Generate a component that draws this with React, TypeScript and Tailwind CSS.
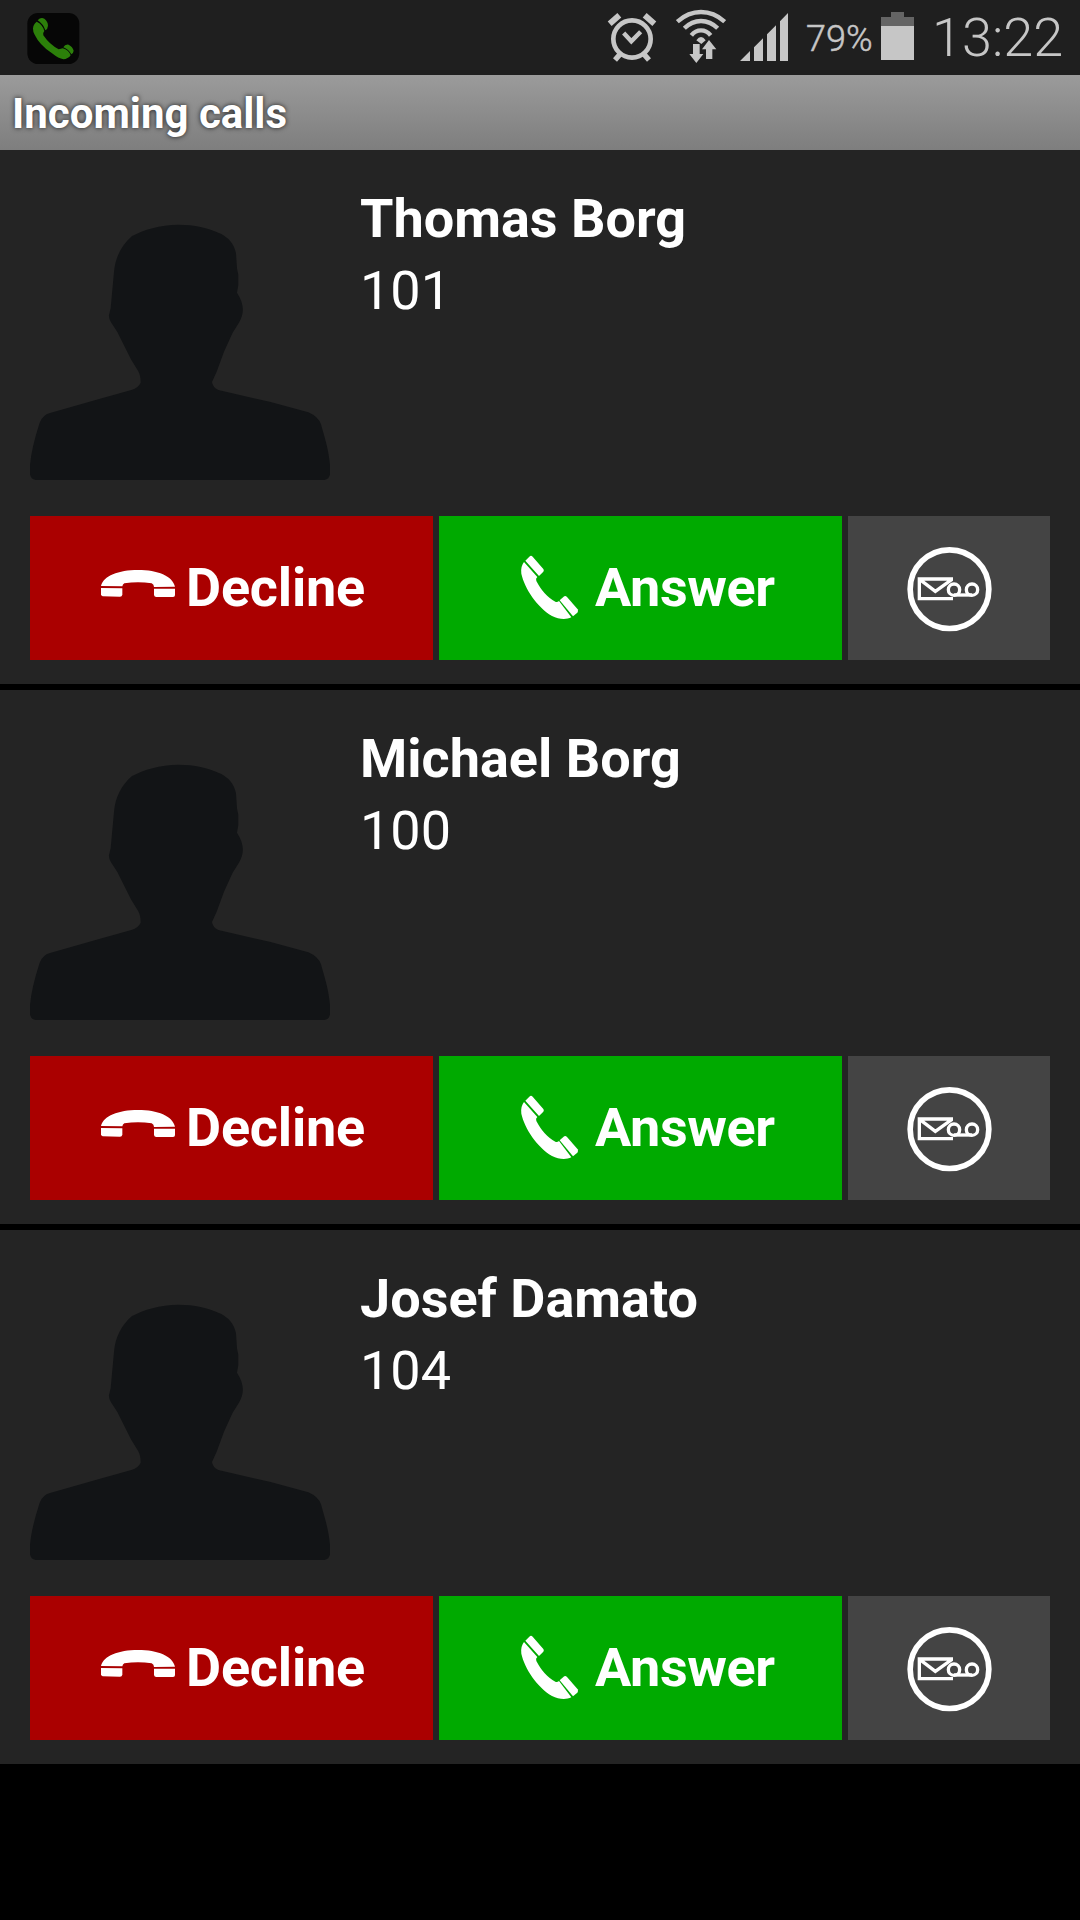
const calls = [
  { name: "Thomas Borg", number: "101" },
  { name: "Michael Borg", number: "100" },
  { name: "Josef Damato", number: "104" },
];

export default function App() {
  return (
    <div className="w-[1080px] h-[1920px] bg-black text-white font-[Roboto,sans-serif] overflow-hidden">
      <StatusBar />
      <header className="h-[75px] flex items-center px-3 pt-0.5 bg-linear-to-b from-[#9b9b9b] to-[#7e7e7e]">
        <h1 className="text-[42px] leading-none font-bold text-shadow-[0_0_5px_rgba(0,0,0,0.8)]">
          Incoming calls
        </h1>
      </header>
      <main className="flex flex-col gap-1.5">
        {calls.map((call) => (
          <CallCard key={call.number} name={call.name} number={call.number} />
        ))}
      </main>
    </div>
  );
}

function StatusBar() {
  return (
    <div className="h-[75px] flex items-center bg-[#1f1f1f] text-[#c6c6c6] pl-[27px] pr-[18px]">
      <AppIcon />
      <div className="ml-auto flex items-center">
        <AlarmIcon />
        <WifiIcon />
        <SignalIcon />
        <span className="w-[75px] ml-[18px] pt-0.5 text-[36px] leading-none font-light [-webkit-text-stroke:0.5px]">
          79%
        </span>
        <BatteryIcon />
        <span className="w-[130px] ml-[18px] text-[54px] leading-none font-light">
          13:22
        </span>
      </div>
    </div>
  );
}

function CallCard({ name, number }: { name: string; number: string }) {
  return (
    <article className="h-[534px] bg-[#242424] px-[30px] pt-[30px] pb-6 flex flex-col">
      <div className="flex gap-[30px]">
        <Avatar />
        <div className="pt-[3px] text-[54px] leading-[72px]">
          <h2 className="font-bold">{name}</h2>
          <p>{number}</p>
        </div>
      </div>
      <div className="mt-auto flex gap-1.5 h-36">
        <button className="w-[403px] pl-[60px] flex items-center bg-[#aa0000] text-[54px] font-bold tracking-[-0.2px]">
          <DeclineIcon />
          <span className="pb-0.5">Decline</span>
        </button>
        <button className="w-[403px] pl-[60px] flex items-center bg-[#00aa00] text-[54px] font-bold tracking-[-0.4px]">
          <AnswerIcon />
          <span className="pb-0.5">Answer</span>
        </button>
        <button
          aria-label="Voicemail"
          className="w-[202px] flex items-center justify-center bg-[#444444]"
        >
          <VoicemailIcon />
        </button>
      </div>
    </article>
  );
}

/* Icons */

function Avatar() {
  return (
    <svg width="300" height="300" viewBox="90 -60 900 900" fill="#121416">
      <path d="M535 74C480 74 430 90 396 108C364 136 346 172 342 215L332 325L327 345Q326 356 333 367L352 396L394 480L414 512Q422 525 422 548Q416 562 394 570L300 596L150 639Q128 645 119 668Q94 745 90 795V823Q92 838 107 840H973Q988 838 990 823V795C986 750 976 720 963 673Q955 650 925 637L812 606L655 570Q638 562 636 546L650 515L672 455L698 398L716 370C734 340 733 312 711 278L715 255V225L711 205L708 160C702 130 684 113 664 102C620 82 585 74 535 74Z" />
    </svg>
  );
}

function AppIcon() {
  return (
    <svg width="53" height="75" viewBox="80 0 159 225">
      <rect x="81" y="39" width="156" height="153" rx="32" fill="#060606" />
      <path
        d="M98 86Q98 74 109 65Q127 73 132 93Q126 100 129 106Q148 134 175 148Q182 147 187 145Q205 150 211 166Q203 177 189 178Q175 176 155 160Q117 134 103 104Q98 96 98 86ZM112 61Q121 51 132 56Q143 65 143 77Q142 88 135 91Q129 72 112 61ZM189 142Q194 132 205 134Q217 140 220 152Q219 160 213 163Q205 148 189 142Z"
        fill="#2c800a"
      />
    </svg>
  );
}

function AlarmIcon() {
  return (
    <svg width="50" height="75" viewBox="51 0 150 225" fill="none" stroke="currentColor">
      <circle cx="126" cy="117" r="56" strokeWidth="14" />
      <path d="M101 99L124 124L152 95" strokeWidth="13" />
      <path d="M90 163L75 180M162 163L177 180" strokeWidth="16" />
      <path d="M59 71L88 46M193 71L164 46" strokeWidth="18" />
    </svg>
  );
}

function WifiIcon() {
  return (
    <svg className="ml-[19px]" width="50" height="75" viewBox="258 0 150 225" fill="currentColor">
      <g fill="none" stroke="currentColor" strokeWidth="13">
        <path d="M262 65Q294 36 333 36T404 65" />
        <path d="M283 85Q305 63 333 63T383 85" />
        <path d="M304 106Q316 91 333 91T362 106" />
      </g>
      <path d="M319 121Q333 101 347 121L334 132Z" />
      <path d="M309 132H329V162H340L319 189L298 162H309Z" />
      <path d="M357 120L379 148H367V177H348V148H336Z" />
    </svg>
  );
}

function SignalIcon() {
  return (
    <svg className="ml-3.5" width="48" height="75" viewBox="450 0 144 225" fill="currentColor">
      <path d="M450 183L480 153V183ZM492 183V142L519 115V183ZM531 183V103L558 76V183ZM570 183V64L594 39V183Z" />
    </svg>
  );
}

function BatteryIcon() {
  return (
    <svg width="33" height="75" viewBox="273 0 99 225">
      <path d="M273 51H303V36H342V51H372V78H273Z" fill="#646464" />
      <path d="M273 78H372V180H273Z" fill="currentColor" />
    </svg>
  );
}

function DeclineIcon() {
  return (
    <svg width="96" height="96" viewBox="270 120 288 288" fill="currentColor">
      <path d="M303 258C310 228 355 210 414 210S518 228 525 260L462 261Q462 254 455 250Q414 243 373 250Q368 253 367 259Z" />
      <path d="M303 264L367 265V284Q366 290 360 290L308 289Q303 288 303 283Z" />
      <path d="M462 266H525V285Q525 291 519 291H468Q462 290 462 284Z" />
    </svg>
  );
}

function AnswerIcon() {
  return (
    <svg width="96" height="96" viewBox="207 120 288 288" fill="currentColor">
      <path d="M282 186L322 231Q316 236 319 243C333 270 353 293 376 305Q382 307 387 303L424 352C408 360 386 358 366 348C320 320 284 265 274 221Q271 200 282 186Z" />
      <path d="M286 182L298 170Q303 165 308 170L340 207Q343 211 340 215L327 228Z" />
      <path d="M389 301L401 290Q406 286 411 291L443 328Q446 333 442 338L429 349Z" />
    </svg>
  );
}

function VoicemailIcon() {
  return (
    <svg width="96" height="96" viewBox="213 120 288 288" fill="none" stroke="currentColor">
      <circle cx="358.500" cy="267.500" r="118" strokeWidth="17" />
      <path d="M369 237H268V296H369M270 239L316 274L366 238" strokeWidth="10" />
      <circle cx="372" cy="269" r="17" strokeWidth="10" />
      <circle cx="426" cy="269" r="17" strokeWidth="10" />
      <path d="M372 285H426" strokeWidth="10" />
    </svg>
  );
}
